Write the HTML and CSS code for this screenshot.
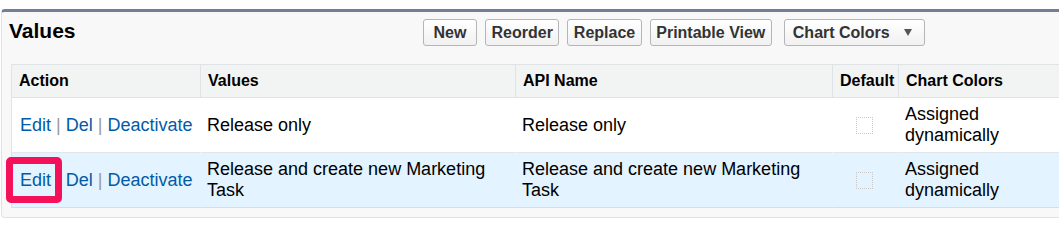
FILE: index.html
```html
<!DOCTYPE html>
<html>
<head>
<meta charset="utf-8">
<link rel="stylesheet" href="styles.css">
</head>
<body>
<div class="panel">
  <div class="pb-header">
    <h2 class="pb-title">Values</h2>
    <div class="pb-buttons">
      <button class="btn btn-new">New</button>
      <button class="btn">Reorder</button>
      <button class="btn">Replace</button>
      <button class="btn">Printable View</button>
      <button class="btn btn-menu">Chart Colors <span class="caret"></span></button>
    </div>
  </div>
  <table class="list">
    <colgroup>
      <col class="c-action">
      <col class="c-values">
      <col class="c-api">
      <col class="c-default">
      <col class="c-colors">
    </colgroup>
    <thead>
      <tr>
        <th>Action</th>
        <th>Values</th>
        <th>API Name</th>
        <th>Default</th>
        <th>Chart Colors</th>
      </tr>
    </thead>
    <tbody>
      <tr class="row">
        <td class="actions"><a href="#">Edit</a> <span class="sep">|</span> <a href="#">Del</a> <span class="sep">|</span> <a href="#">Deactivate</a></td>
        <td>Release only</td>
        <td>Release only</td>
        <td class="center"><span class="checkbox"></span></td>
        <td>Assigned dynamically</td>
      </tr>
      <tr class="row highlight">
        <td class="actions"><a href="#" class="callout">Edit</a> <span class="sep">|</span> <a href="#">Del</a> <span class="sep">|</span> <a href="#">Deactivate</a></td>
        <td>Release and create new Marketing Task</td>
        <td>Release and create new Marketing Task</td>
        <td class="center"><span class="checkbox"></span></td>
        <td>Assigned dynamically</td>
      </tr>
    </tbody>
  </table>
</div>
</body>
</html>
```
FILE: styles.css
```css
html, body {
  margin: 0;
  padding: 0;
  overflow: hidden;
  background: #ffffff;
  font-family: "Liberation Sans", Arial, sans-serif;
  color: #000;
}

.panel {
  margin: 9px 0 0 1px;
  width: 1080px;
  height: 209px;
  box-sizing: border-box;
  background: #f8f8f8;
  border-top: 3px solid #747e96;
  border-left: 1px solid #e0e3e5;
  border-bottom: 1px solid #e0e3e5;
  border-radius: 4px 0 0 4px;
}

.pb-header {
  display: flex;
  align-items: center;
  padding: 7px 0 0 7px;
  height: 27px;
  margin-bottom: 18px;
}

.pb-title {
  flex: 0 0 414px;
  margin: 0 0 3px 0;
  font-size: 21px;
  font-weight: bold;
  line-height: 24px;
}

.pb-buttons {
  display: flex;
  gap: 8px;
}

.btn {
  height: 27px;
  box-sizing: border-box;
  padding: 0 5.5px;
  font-family: "Liberation Sans", Arial, sans-serif;
  font-size: 16px;
  font-weight: bold;
  color: #333;
  background: linear-gradient(#ffffff, #f1f1f1);
  border: 1px solid #b5b5b5;
  border-radius: 3px;
  line-height: 25px;
}

.btn-new {
  width: 54px;
}

.btn-menu {
  margin-left: 4px;
  width: 141px;
  text-align: left;
  padding-left: 8px;
  display: flex;
  align-items: center;
}

.caret {
  margin-left: 14px;
  width: 0;
  height: 0;
  border-left: 4.5px solid transparent;
  border-right: 4.5px solid transparent;
  border-top: 7px solid #555;
}

.list {
  margin-left: 9px;
  border-collapse: separate;
  border-spacing: 0;
  table-layout: fixed;
  width: 1060px;
  border-left: 1px solid #e0e3e5;
}

.c-action { width: 188px; }
.c-values { width: 315px; }
.c-api { width: 317px; }
.c-default { width: 66px; }
.c-colors { width: 174px; }

.list th {
  height: 34px;
  box-sizing: border-box;
  padding: 0 0 0 7px;
  background: #f2f3f3;
  border-top: 1px solid #e0e3e5;
  border-bottom: 1px solid #e0e3e5;
  border-left: 1px solid #e0e3e5;
  font-size: 16px;
  font-weight: bold;
  text-align: left;
  white-space: nowrap;
}

.list th:first-child {
  border-left: none;
}

.list td {
  height: 55px;
  box-sizing: border-box;
  padding: 0 8px 0 6px;
  border-left: 1px solid transparent;
  border-bottom: 1px solid #e3e6e8;
  font-size: 18px;
  line-height: 21px;
  vertical-align: middle;
  background: #ffffff;
}

.list td:first-child {
  border-left: none;
  padding-left: 8px;
}

.list tr.highlight td {
  background: #e3f3ff;
  border-bottom-color: #d8dde0;
}

.actions {
  white-space: nowrap;
}

.actions a {
  color: #015ba7;
  text-decoration: none;
}

.sep {
  color: #9a9a9a;
}

.center {
  text-align: center;
}

.checkbox {
  display: inline-block;
  width: 17px;
  height: 17px;
  box-sizing: border-box;
  border: 1px dotted #c8c8c8;
  vertical-align: middle;
}

.callout {
  position: relative;
}

.callout::before {
  content: "";
  position: absolute;
  left: -14px;
  right: -11px;
  top: -13px;
  bottom: -13px;
  border: 7px solid #f5105a;
  border-radius: 5px;
}
```
